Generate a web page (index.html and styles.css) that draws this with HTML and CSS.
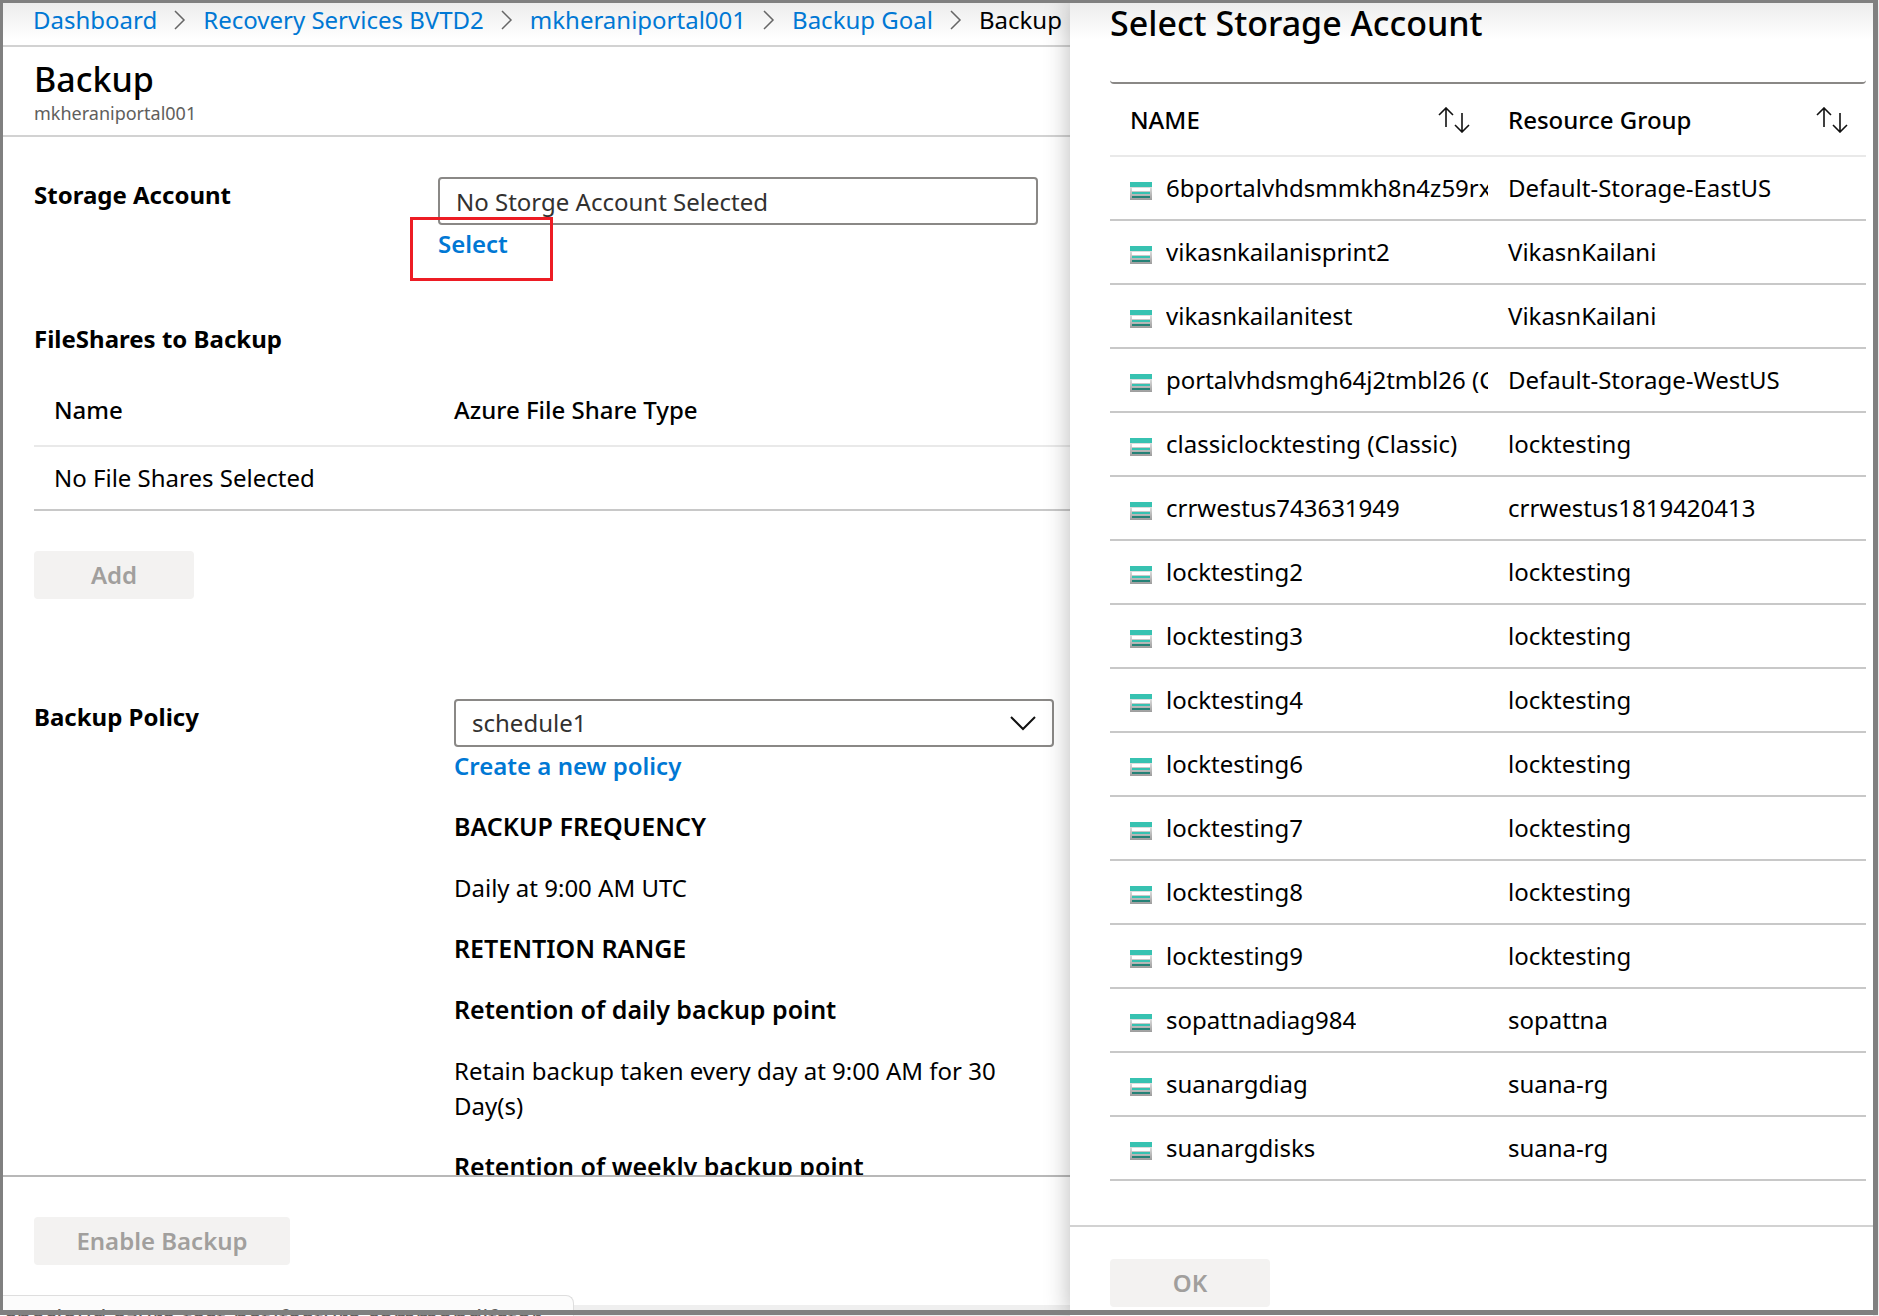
FILE: index.html
```html
<!DOCTYPE html>
<html lang="en">
<head>
<meta charset="utf-8">
<title>Backup</title>
<link rel="stylesheet" href="styles.css">
</head>
<body>
<svg class="sprite" aria-hidden="true">
  <defs>
    <linearGradient id="storage-body" x1="0" y1="0" x2="0" y2="1"><stop offset="0" stop-color="#e4e4e4"/><stop offset="1" stop-color="#9c9c9c"/></linearGradient>
  </defs>
  <symbol id="storage" viewBox="0 0 22 18">
    <path d="M0 4h22v14H0z" fill="url(#storage-body)"/>
    <path d="M0 0h22v5H0z" fill="#37c2b1"/>
    <path d="M2 6h18v3H2z" fill="#fff"/>
    <path d="M2 10h18v2H2z" fill="#37c2b1"/>
    <path d="M2 14h18v2H2z" fill="#258277"/>
  </symbol>
  <symbol id="chevron" viewBox="0 0 12 20"><path d="M1 1l9 9-9 9" fill="none" stroke="#666" stroke-width="1.5"/></symbol>
  <symbol id="sort" viewBox="0 0 32 26"><path d="M8 20V1M1 8l7-7 7 7M24 6v19M17 18l7 7 7-7" fill="none" stroke="#111" stroke-width="1.6"/></symbol>
</svg>
<div class="shell">
  <main class="blade">
    <nav class="crumbs" aria-label="Breadcrumb">
      <a href="#">Dashboard</a><svg class="chevron"><use href="#chevron"/></svg>
      <a href="#">Recovery Services BVTD2</a><svg class="chevron"><use href="#chevron"/></svg>
      <a href="#">mkheraniportal001</a><svg class="chevron"><use href="#chevron"/></svg>
      <a href="#">Backup Goal</a><svg class="chevron"><use href="#chevron"/></svg>
      <span>Backup</span>
    </nav>
    <header class="blade-head">
      <h1>Backup</h1>
      <p>mkheraniportal001</p>
    </header>
    <div class="content">
      <div class="field account">
        <label class="caption" for="account">Storage Account</label>
        <div class="control">
          <input class="box" id="account" type="text" value="No Storge Account Selected" readonly>
          <a class="action highlighted" href="#">Select</a>
        </div>
      </div>
      <h2 class="caption">FileShares to Backup</h2>
      <table class="shares">
        <thead><tr><th>Name</th><th>Azure File Share Type</th></tr></thead>
        <tbody><tr><td colspan="2">No File Shares Selected</td></tr></tbody>
      </table>
      <button class="btn" type="button" disabled>Add</button>
      <div class="field policy">
        <label class="caption" for="policy">Backup Policy</label>
        <div class="control">
          <div class="select-wrap">
            <select class="box" id="policy"><option>schedule1</option></select>
            <svg class="caret" viewBox="0 0 26 18"><path d="M1 2l12 12L25 2" fill="none" stroke="#111" stroke-width="2"/></svg>
          </div>
          <a class="action" href="#">Create a new policy</a>
          <h3>BACKUP FREQUENCY</h3>
          <p>Daily at 9:00 AM UTC</p>
          <h3>RETENTION RANGE</h3>
          <h3>Retention of daily backup point</h3>
          <p>Retain backup taken every day at 9:00 AM for 30 Day(s)</p>
          <h3>Retention of weekly backup point</h3>
        </div>
      </div>
    </div>
    <footer class="blade-foot">
      <button class="btn wide" type="button" disabled>Enable Backup</button>
    </footer>
    <div class="strip"></div>
    <div class="status">specloud azure-test-net/feature commondifstor</div>
  </main>
  <aside class="panel">
    <div class="panel-body">
      <h2 class="panel-title">Select Storage Account</h2>
      <div class="filter-edge"></div>
      <table class="accounts">
        <thead><tr>
          <th><div class="sortable">NAME<svg class="sort"><use href="#sort"/></svg></div></th>
          <th><div class="sortable">Resource Group<svg class="sort"><use href="#sort"/></svg></div></th>
        </tr></thead>
        <tbody>
          <tr><td><div class="name"><svg><use href="#storage"/></svg><span>6bportalvhdsmmkh8n4z59rx</span></div></td><td>Default-Storage-EastUS</td></tr>
          <tr><td><div class="name"><svg><use href="#storage"/></svg><span>vikasnkailanisprint2</span></div></td><td>VikasnKailani</td></tr>
          <tr><td><div class="name"><svg><use href="#storage"/></svg><span>vikasnkailanitest</span></div></td><td>VikasnKailani</td></tr>
          <tr><td><div class="name"><svg><use href="#storage"/></svg><span>portalvhdsmgh64j2tmbl26 (C</span></div></td><td>Default-Storage-WestUS</td></tr>
          <tr><td><div class="name"><svg><use href="#storage"/></svg><span>classiclocktesting (Classic)</span></div></td><td>locktesting</td></tr>
          <tr><td><div class="name"><svg><use href="#storage"/></svg><span>crrwestus743631949</span></div></td><td>crrwestus1819420413</td></tr>
          <tr><td><div class="name"><svg><use href="#storage"/></svg><span>locktesting2</span></div></td><td>locktesting</td></tr>
          <tr><td><div class="name"><svg><use href="#storage"/></svg><span>locktesting3</span></div></td><td>locktesting</td></tr>
          <tr><td><div class="name"><svg><use href="#storage"/></svg><span>locktesting4</span></div></td><td>locktesting</td></tr>
          <tr><td><div class="name"><svg><use href="#storage"/></svg><span>locktesting6</span></div></td><td>locktesting</td></tr>
          <tr><td><div class="name"><svg><use href="#storage"/></svg><span>locktesting7</span></div></td><td>locktesting</td></tr>
          <tr><td><div class="name"><svg><use href="#storage"/></svg><span>locktesting8</span></div></td><td>locktesting</td></tr>
          <tr><td><div class="name"><svg><use href="#storage"/></svg><span>locktesting9</span></div></td><td>locktesting</td></tr>
          <tr><td><div class="name"><svg><use href="#storage"/></svg><span>sopattnadiag984</span></div></td><td>sopattna</td></tr>
          <tr><td><div class="name"><svg><use href="#storage"/></svg><span>suanargdiag</span></div></td><td>suana-rg</td></tr>
          <tr><td><div class="name"><svg><use href="#storage"/></svg><span>suanargdisks</span></div></td><td>suana-rg</td></tr>
        </tbody>
      </table>
    </div>
    <footer class="panel-foot">
      <button class="btn" type="button" disabled>OK</button>
    </footer>
  </aside>
</div>
</body>
</html>
```
FILE: styles.css
```css
* { box-sizing: border-box; }

body {
  margin: 0;
  background: #fff;
  color: #000;
  font: 400 24px/36px "Noto Sans", "Open Sans", sans-serif;
}

h1, h2, h3, p { margin: 0; }
a { color: #0078d4; text-decoration: none; }
.sprite { position: absolute; width: 0; height: 0; }

.shell {
  position: relative;
  display: grid;
  grid-template-columns: minmax(0, 1067fr) minmax(0, 803fr);
  height: 100vh;
  padding: 3px 6px 0 3px;
  overflow: hidden;
}
/* window frame, drawn over the page edges */
.shell::after {
  content: "";
  position: absolute;
  inset: 0 1px 1px 0;
  border: solid #808080;
  border-width: 3px 5px 5px 3px;
  pointer-events: none;
}

.blade, .panel {
  position: relative;
  display: flex;
  flex-direction: column;
  min-width: 0;
  min-height: 0;
  background: linear-gradient(#ededed, #fff 36px);
}

.crumbs {
  display: flex;
  align-items: center;
  gap: 17px;
  height: 44px;
  padding: 0 0 8px 30px;
  border-bottom: 2px solid #d2d2d2;
  white-space: nowrap;
}
.chevron { flex: none; width: 12px; height: 20px; }

.blade-head {
  height: 90px;
  padding: 10px 31px 0;
  border-bottom: 2px solid #d2d2d2;
}
.blade-head h1 { font-size: 34px; line-height: 44px; font-weight: 500; }
.blade-head p { font-size: 18px; line-height: 24px; color: #605e5c; }

.content { flex: 1; min-height: 0; padding: 40px 0 0 31px; overflow: hidden; }
.caption { font-size: 24px; font-weight: 700; }
.field { display: flex; align-items: flex-start; }
.account { height: 144px; }
.account .caption { width: 404px; }
.policy .caption { width: 420px; }
.control { display: flex; flex-direction: column; align-items: flex-start; width: 600px; }

.box {
  width: 100%;
  height: 48px;
  padding: 0 16px;
  border: 2px solid #8a8886;
  border-radius: 4px;
  background: #fff;
  color: #323130;
  font: inherit;
  appearance: none;
}
.select-wrap { position: relative; width: 100%; height: 48px; }
.caret { position: absolute; right: 18px; top: 16px; width: 26px; height: 18px; }
.action { font-weight: 600; line-height: 38px; }
.highlighted { position: relative; }
.highlighted::after {
  content: "";
  position: absolute;
  inset: -8px -45px -18px -28px;
  border: 3px solid #ed1c24;
}

.shares, .accounts { width: 100%; border-collapse: collapse; table-layout: fixed; }
th { font-weight: 500; text-align: left; }
th, td { padding: 0 0 0 20px; }
.shares { margin-bottom: 40px; }
.shares th { height: 89px; padding-top: 18px; border-bottom: 2px solid #e9e9e9; }
.shares th:first-child { width: 400px; }
.shares td { height: 64px; border-bottom: 2px solid #c8c8c8; }

.btn {
  width: 160px;
  height: 48px;
  padding: 0;
  border: 0;
  border-radius: 4px;
  background: #f3f2f1;
  color: #a19f9d;
  font: inherit;
  font-weight: 600;
}
.wide { width: 256px; }

.policy { margin-top: 100px; }
.control h3, .control p { margin-bottom: 26px; line-height: 35px; }
.control h3 { font-size: 25px; font-weight: 600; }
.control .action + h3 { margin-top: 24px; }

.blade-foot { height: 130px; padding: 40px 31px 0; border-top: 2px solid #b8b8b8; }
.strip { height: 11px; background: #efefef; }
.status {
  position: absolute;
  left: 0;
  bottom: 0;
  width: 571px;
  height: 21px;
  padding: 4px 0 0 2px;
  border: 1px solid #dedede;
  border-width: 1px 1px 0 0;
  border-radius: 0 8px 0 0;
  background: #fcfcfc;
  color: #605e5c;
  white-space: nowrap;
  overflow: hidden;
}

.panel { box-shadow: 0 0 24px #00000048; }
.panel-body { flex: 1; min-height: 0; padding: 0 7px 0 40px; }
.panel-title { font-size: 34px; line-height: 40px; font-weight: 500; }
.filter-edge { height: 41px; border-bottom: 2px solid #8a8886; border-radius: 4px; }
.accounts th { height: 72px; border-bottom: 2px solid #e9e9e9; }
.accounts td { height: 64px; border-bottom: 2px solid #c8c8c8; white-space: nowrap; }
.sortable { display: flex; align-items: center; justify-content: space-between; padding-right: 18px; }
.sort { width: 32px; height: 26px; }
.name { display: flex; align-items: center; gap: 14px; overflow: hidden; }
.name svg { flex: none; width: 22px; height: 18px; margin-top: 6px; }
.name span { overflow: hidden; }
.panel-foot { height: 91px; padding: 32px 40px 0; border-top: 2px solid #d2d2d2; }
```
